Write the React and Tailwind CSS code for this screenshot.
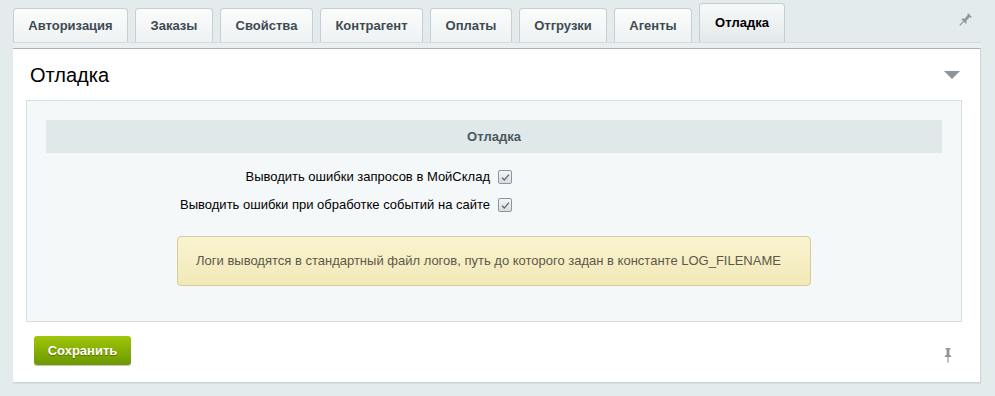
import React from 'react';

const tabs = [
  { label: 'Авторизация', w: 'w-[115px]' },
  { label: 'Заказы', w: 'w-[78px]' },
  { label: 'Свойства', w: 'w-[93px]' },
  { label: 'Контрагент', w: 'w-[103px]' },
  { label: 'Оплаты', w: 'w-[82px]' },
  { label: 'Отгрузки', w: 'w-[88px]' },
  { label: 'Агенты', w: 'w-[78px]' },
];

const Pin = ({ className }) => (
  <svg viewBox="0 0 16 16" width="16" height="16" className={className}>
    <path d="M5.5 1h5v1.5H9.4v5l1.8 1.5V10H4.8V9l1.8-1.5v-5H5.5z" fill="#8e979b" />
    <path d="M8 10v5.5" stroke="#8e979b" strokeWidth="1.2" />
  </svg>
);

const Check = () => (
  <span className="w-[14px] h-[14px] rounded-[2px] border border-[#8d969b] bg-gradient-to-b from-[#f3f5f6] to-[#d9dee1] flex items-center justify-center">
    <svg viewBox="0 0 12 12" width="11" height="11">
      <path d="M2.2 6.2l2.5 2.6 5-6" fill="none" stroke="#5f6a70" strokeWidth="1.5" />
    </svg>
  </span>
);

export default function App() {
  return (
    <div className="w-[995px] h-[396px] bg-[#e4ebed] pl-[13px] pt-[3px] font-['Liberation_Sans',Arial,sans-serif] overflow-hidden">
      <div className="relative flex items-end gap-[7px] h-[39px] w-[968px]">
        {tabs.map((t) => (
          <div
            key={t.label}
            className={`${t.w} h-[34px] rounded-t-[4px] border border-b-0 border-[#c6d0d4] bg-gradient-to-b from-[#fbfcfc] to-[#eef2f3] flex items-center justify-center text-[13px] font-bold text-[#3e4a52]`}
          >
            {t.label}
          </div>
        ))}
        <div className="w-[86px] h-[39px] rounded-t-[4px] border border-b-0 border-[#c3cdd1] bg-gradient-to-b from-[#f7f9f9] to-[#e3e9eb] flex items-center justify-center text-[13px] font-bold text-black">
          Отладка
        </div>
        <Pin className="absolute right-[8px] top-[9px] rotate-45" />
      </div>
      <div className="w-[968px] h-[6px] bg-[#e9eff0] border-t border-[#d3dcdf]" />
      <div className="w-[968px] h-[335px] bg-white border-t border-[#a9b3b7] border-r border-r-[#cdd6d9] border-b border-b-[#cbd4d7] shadow-[0_1px_1px_rgba(0,0,0,0.06)] flex flex-col">
        <div className="h-[51px] flex items-center justify-between pl-[17px] pr-[20px]">
          <span className="text-[20px] text-black leading-none">Отладка</span>
          <span className="w-0 h-0 border-l-[8px] border-r-[8px] border-t-[8px] border-l-transparent border-r-transparent border-t-[#8d9499]" />
        </div>
        <div className="ml-[13px] w-[936px] h-[222px] bg-[#f5f8f9] border border-[#d5dfe3] px-[19px] pt-[19px]">
          <div className="h-[33px] bg-[#e0e8ea] flex items-center justify-center text-[13px] font-bold text-[#4a5860]">
            Отладка
          </div>
          <div className="mt-[10px] flex flex-col">
            <div className="h-[28px] flex items-center">
              <span className="w-[444px] text-right text-[13px] text-black">Выводить ошибки запросов в МойСклад</span>
              <span className="ml-[8px]"><Check /></span>
            </div>
            <div className="h-[28px] flex items-center">
              <span className="w-[444px] text-right text-[13px] text-black">Выводить ошибки при обработке событий на сайте</span>
              <span className="ml-[8px]"><Check /></span>
            </div>
          </div>
          <div className="mt-[17px] mx-auto w-[634px] h-[50px] rounded-[4px] border border-[#d6cb9c] bg-gradient-to-b from-[#f9f3d2] to-[#f2e9b7] flex items-center pl-[18px] text-[13px] text-[#5e5848]">
            Логи выводятся в стандартный файл логов, путь до которого задан в константе LOG_FILENAME
          </div>
        </div>
        <div className="flex items-center justify-between pl-[21px] pr-[24px] mt-[14px]">
          <button className="w-[97px] h-[29px] rounded-[3px] bg-gradient-to-b from-[#a0c70c] to-[#6c9800] shadow-[0_1px_1px_rgba(0,0,0,0.25)] text-white text-[13px] font-bold [text-shadow:0_1px_1px_rgba(0,0,0,0.35)]">
            Сохранить
          </button>
          <Pin className="mt-[8px]" />
        </div>
      </div>
    </div>
  );
}
